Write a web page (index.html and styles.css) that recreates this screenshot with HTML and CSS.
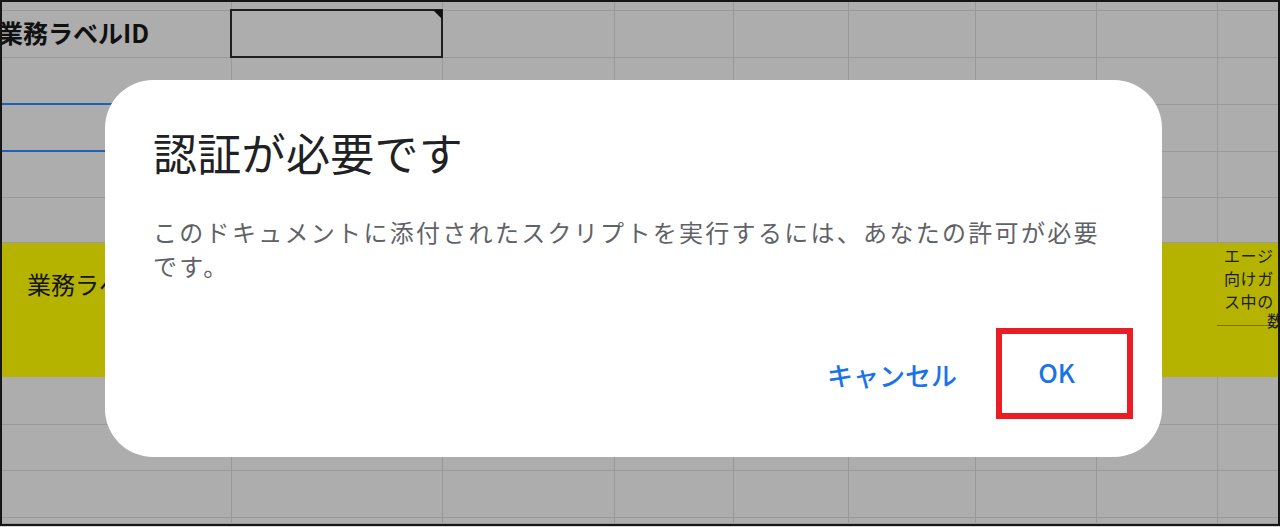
FILE: index.html
```html
<!DOCTYPE html>
<html lang="ja">
<head>
<meta charset="utf-8">
<title>認証が必要です</title>
<link rel="stylesheet" href="styles.css">
</head>
<body>
<div class="screen">
  <div class="sheet">
    <div class="row r0"><div class="c"></div><div class="c"></div><div class="c"></div><div class="c"></div><div class="c"></div><div class="c"></div><div class="c"></div><div class="c"></div><div class="c"></div></div>
    <div class="row r1"><div class="c label">業務ラベルID</div><div class="c input"></div><div class="c"></div><div class="c"></div><div class="c"></div><div class="c"></div><div class="c"></div><div class="c"></div><div class="c"></div></div>
    <div class="row r2"><div class="c blue"></div><div class="c"></div><div class="c"></div><div class="c"></div><div class="c"></div><div class="c"></div><div class="c"></div><div class="c"></div><div class="c"></div></div>
    <div class="row r3"><div class="c blue"></div><div class="c"></div><div class="c"></div><div class="c"></div><div class="c"></div><div class="c"></div><div class="c"></div><div class="c"></div><div class="c"></div></div>
    <div class="row r4"><div class="c"></div><div class="c"></div><div class="c"></div><div class="c"></div><div class="c"></div><div class="c"></div><div class="c"></div><div class="c"></div><div class="c"></div></div>
    <div class="row r5"><div class="c"></div><div class="c"></div><div class="c"></div><div class="c"></div><div class="c"></div><div class="c"></div><div class="c"></div><div class="c"></div><div class="c"></div></div>
    <div class="row r6">
      <div class="y-main">業務ラベル</div>
      <div class="y-side">
        <div class="ln">エージ</div>
        <div class="ln">向けガ</div>
        <div class="ln">ス中の</div>
        <div class="ln last">数</div>
      </div>
    </div>
    <div class="row r7"><div class="c"></div><div class="c"></div><div class="c"></div><div class="c"></div><div class="c"></div><div class="c"></div><div class="c"></div><div class="c"></div><div class="c"></div></div>
    <div class="row r8"><div class="c"></div><div class="c"></div><div class="c"></div><div class="c"></div><div class="c"></div><div class="c"></div><div class="c"></div><div class="c"></div><div class="c"></div></div>
    <div class="row r9"><div class="c"></div><div class="c"></div><div class="c"></div><div class="c"></div><div class="c"></div><div class="c"></div><div class="c"></div><div class="c"></div><div class="c"></div></div>
    <div class="row r10"><div class="c"></div><div class="c"></div><div class="c"></div><div class="c"></div><div class="c"></div><div class="c"></div><div class="c"></div><div class="c"></div><div class="c"></div></div>
  </div>

  <div class="dialog" role="dialog">
    <h1 class="title">認証が必要です</h1>
    <p class="body">このドキュメントに添付されたスクリプトを実行するには、あなたの許可が必要です。</p>
    <div class="actions">
      <button class="btn">キャンセル</button>
      <button class="btn ok">OK<span class="mark"></span></button>
    </div>
  </div>
</div>
</body>
</html>
```

FILE: styles.css
```css
html, body {
  margin: 0;
  padding: 0;
}
body {
  width: 1280px;
  height: 527px;
  background: #d9d9d9;
  font-family: "Noto Sans CJK JP", "Noto Sans", sans-serif;
  overflow: hidden;
}
.screen {
  position: relative;
  width: 1280px;
  height: 526px;
}
.sheet {
  box-sizing: border-box;
  width: 1280px;
  height: 526px;
  border: 2px solid #151515;
  background: #adadad;
  overflow: hidden;
  display: flex;
  flex-direction: column;
}
.row {
  display: flex;
  flex: none;
}
.c {
  box-sizing: border-box;
  flex: none;
  height: 100%;
  border-right: 1px solid #999999;
  border-bottom: 1px solid #999999;
}
.c:nth-child(1) { width: 230px; }
.c:nth-child(2) { width: 211px; }
.c:nth-child(3) { width: 172px; }
.c:nth-child(4) { width: 119px; }
.c:nth-child(5) { width: 115px; }
.c:nth-child(6) { width: 127px; }
.c:nth-child(7) { width: 121px; }
.c:nth-child(8) { width: 121px; }
.c:nth-child(9) { flex: 1; border-right: none; }

.r0 { height: 9px; }
.r1 { height: 47px; }
.r2 { height: 47px; }
.r3 { height: 47px; }
.r4 { height: 46px; }
.r5 { height: 45px; }
.r6 { height: 134px; background: #b5b300; }
.r7 { height: 48px; }
.r8 { height: 46px; }
.r9 { height: 47px; }
.r10 { flex: 1; }

.label {
  display: flex;
  align-items: center;
  padding-bottom: 4px;
  font-size: 25px;
  font-weight: 700;
  color: #111;
  margin-left: -4px;
  width: 234px !important;
}
.c.blue {
  border-bottom: 2px solid #2160b9;
}
.input {
  position: relative;
}
.input::before {
  content: "";
  position: absolute;
  top: -2px;
  left: -2px;
  right: -1px;
  bottom: -1px;
  border: 2px solid #1e1e1e;
}
.input::after {
  content: "";
  position: absolute;
  top: -1px;
  right: 0;
  border-top: 9px solid #111;
  border-left: 9px solid transparent;
}

.y-main {
  box-sizing: border-box;
  width: 1215px;
  flex: none;
  padding: 25px 0 0 25px;
  font-size: 24px;
  line-height: 32px;
  color: #141414;
}
.y-side {
  flex: 1;
  overflow: hidden;
  padding: 1px 0 0 7px;
  font-size: 16px;
  line-height: 23px;
  letter-spacing: 0.6px;
  color: #1c1c1c;
  white-space: nowrap;
}
.y-side .last {
  margin-left: -8px;
  padding-left: 51px;
  height: 12px;
  line-height: 14px;
  border-bottom: 1px solid rgba(40, 40, 0, 0.45);
}

.dialog {
  position: absolute;
  left: 105px;
  top: 80px;
  width: 1057px;
  box-sizing: border-box;
  background: #fff;
  border-radius: 48px;
  padding: 46px 48px 53px 48px;
}
.title {
  margin: 0;
  font-size: 44px;
  line-height: 52px;
  font-weight: 400;
  color: #202124;
  letter-spacing: 0.3px;
}
.body {
  margin: 37px 0 0 0;
  font-size: 24px;
  line-height: 34px;
  color: #5f6368;
  letter-spacing: 2.3px;
}
.actions {
  display: flex;
  justify-content: flex-end;
  gap: 32px;
  margin-top: 61px;
  padding-right: 15px;
}
.btn {
  position: relative;
  border: none;
  background: transparent;
  font-family: inherit;
  font-size: 26px;
  font-weight: 500;
  line-height: 36px;
  color: #1a73e8;
  padding: 10px 24px 14px;
  margin: 0;
}
.btn:first-child {
  padding-top: 13px;
  padding-bottom: 11px;
}
.ok {
  padding-left: 25px;
  padding-right: 24px;
}
.mark {
  position: absolute;
  top: -16px;
  left: -17px;
  right: -34px;
  bottom: -15px;
  border: 6px solid #ec1c24;
  pointer-events: none;
}
```
